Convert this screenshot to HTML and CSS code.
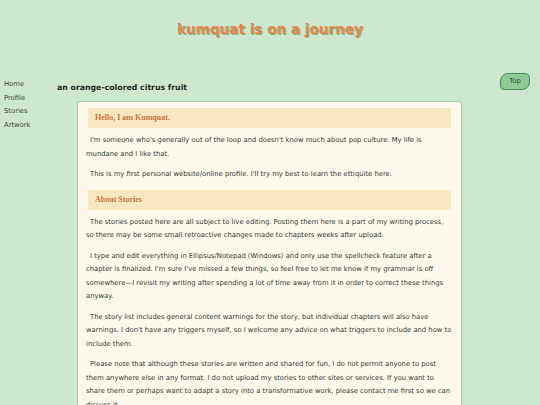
FILE: index.html
```html
<!DOCTYPE html>
<html>
<head>
<meta charset="utf-8">
<link rel="stylesheet" href="styles.css">
</head>
<body>
<header class="site-header">
  <h1 class="site-title">kumquat is on a journey</h1>
</header>
<div class="layout">
  <nav class="side-nav">
    <a href="#">Home</a>
    <a href="#">Profile</a>
    <a href="#">Stories</a>
    <a href="#">Artwork</a>
  </nav>
  <main class="main">
    <h2 class="subtitle">an orange-colored citrus fruit</h2>
    <section class="card">
      <h3 class="card-heading">Hello, I am Kumquat.</h3>
      <p>I'm someone who's generally out of the loop and doesn't know much about pop culture. My life is mundane and I like that.</p>
      <p>This is my first personal website/online profile. I'll try my best to learn the ettiquite here.</p>
      <h3 class="card-heading">About Stories</h3>
      <p>The stories posted here are all subject to live editing. Posting them here is a part of my writing process, so there may be some small retroactive changes made to chapters weeks after upload.</p>
      <p>I type and edit everything in Ellipsus/Notepad (Windows) and only use the spellcheck feature after a chapter is finalized. I'm sure I've missed a few things, so feel free to let me know if my grammar is off somewhere—I revisit my writing after spending a lot of time away from it in order to correct these things anyway.</p>
      <p>The story list includes general content warnings for the story, but individual chapters will also have warnings. I don't have any triggers myself, so I welcome any advice on what triggers to include and how to include them.</p>
      <p>Please note that although these stories are written and shared for fun, I do not permit anyone to post them anywhere else in any format. I do not upload my stories to other sites or services. If you want to share them or perhaps want to adapt a story into a transformative work, please contact me first so we can discuss it.</p>
    </section>
  </main>
</div>
<a class="top-btn" href="#">Top</a>
</body>
</html>
```
FILE: styles.css
```css
html, body {
  margin: 0;
  padding: 0;
}
body {
  background: #cee7cf;
  font-family: "DejaVu Sans", Verdana, sans-serif;
  color: #333a33;
  font-size: 6.8px;
  overflow: hidden;
  height: 405px;
}
.site-header {
  padding-top: 19px;
  height: 53px;
  box-sizing: border-box;
  text-align: center;
}
.site-title {
  margin: 0;
  font-size: 13.6px;
  line-height: 20px;
  font-weight: bold;
  color: #e4874a;
  text-shadow: 1px 1px 0 #7fae7f;
}
.layout {
  display: flex;
  padding-top: 25px;
}
.side-nav {
  width: 53px;
  padding-left: 4px;
  display: flex;
  flex-direction: column;
}
.side-nav a,
.side-nav a:visited {
  color: #3c463c;
  text-decoration: none;
  font-size: 6.8px;
  line-height: 13.5px;
}
.main {
  width: 405px;
}
.subtitle {
  margin: 4px 0 0 0;
  font-size: 7.8px;
  line-height: 12px;
  font-weight: bold;
  color: #1f2a1f;
}
.card {
  margin: 7px 0 0 20px;
  width: 385px;
  box-sizing: border-box;
  background: #fcf8ec;
  border: 1px solid #a9d3aa;
  border-radius: 3px;
  box-shadow: 0 0 1px #9cc89d;
  padding: 6px 10px 0 10px;
  min-height: 320px;
}
.card-heading {
  margin: 0;
  background: #f6e7c1;
  font-family: "Liberation Serif", "Times New Roman", serif;
  font-weight: bold;
  font-size: 8px;
  line-height: 20px;
  color: #c8743e;
  padding: 0 7px;
}
.card p {
  margin: 6px -2px 7px -2px;
  text-indent: 4px;
  font-size: 6.8px;
  line-height: 13.5px;
  color: #333933;
}
.card p + .card-heading {
  margin-top: 8px;
}
.top-btn {
  position: fixed;
  top: 73px;
  left: 500px;
  width: 30px;
  height: 17px;
  box-sizing: border-box;
  background: #8fca95;
  border: 1px solid #3f8f52;
  border-radius: 8px 5px 8px 4px;
  color: #2b4a2f;
  text-decoration: none;
  font-size: 6.8px;
  line-height: 15px;
  text-align: center;
}
```
